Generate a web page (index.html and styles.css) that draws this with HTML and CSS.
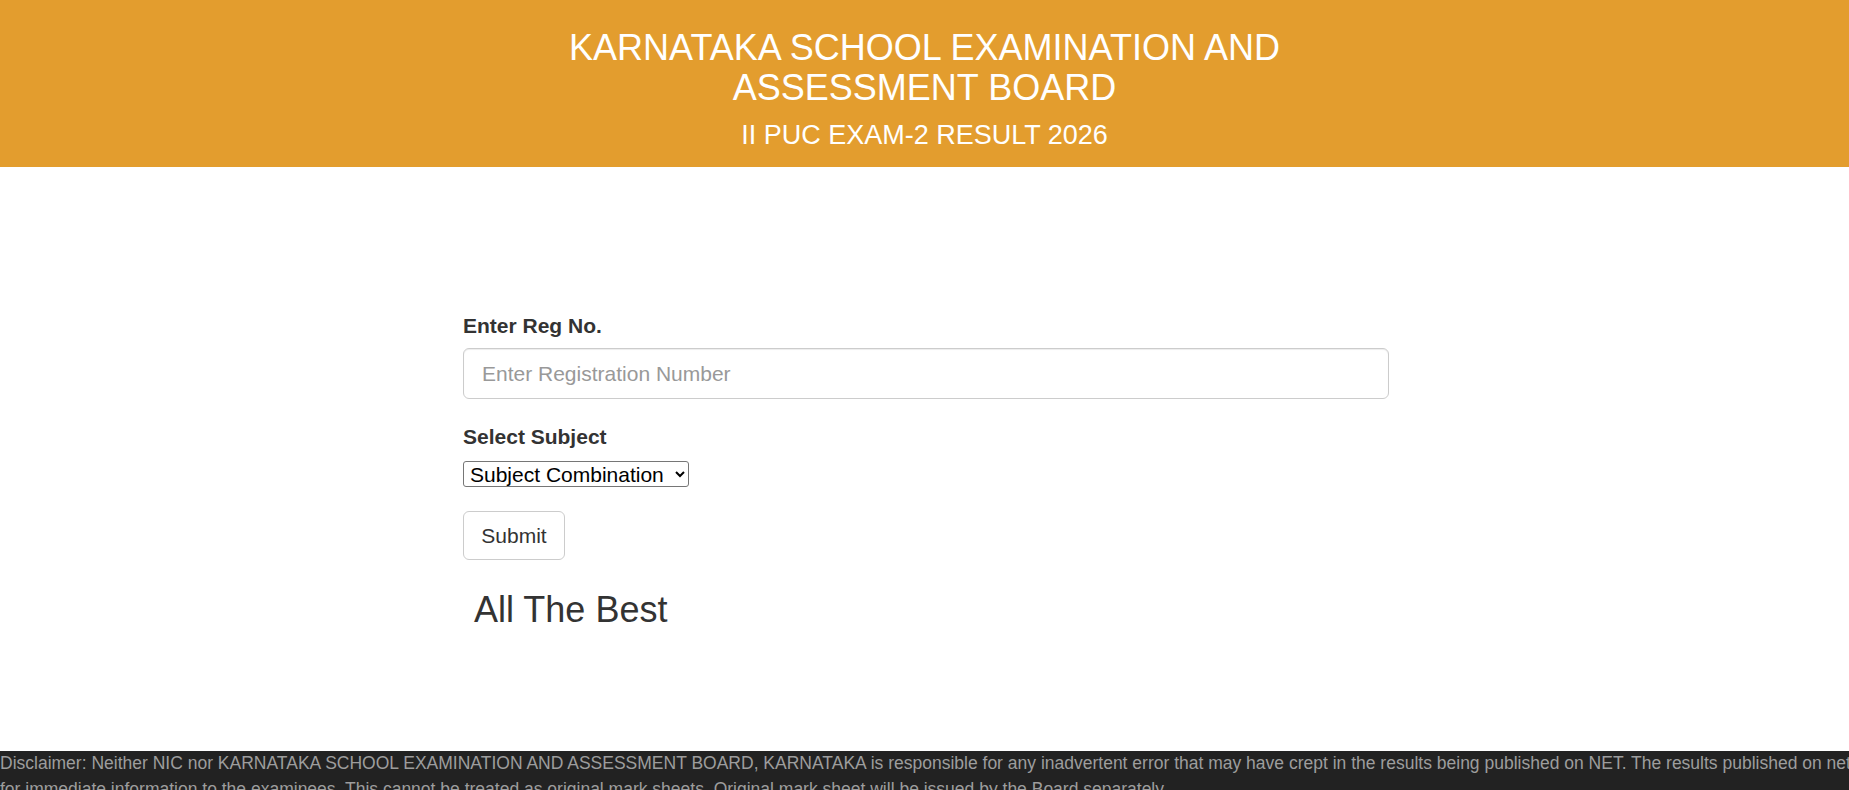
FILE: index.html
```html
<!DOCTYPE html>
<html lang="en">
<head>
<meta charset="utf-8">
<title>II PUC EXAM-2 RESULT 2026</title>
<link rel="stylesheet" href="styles.css">
</head>
<body>
<header class="banner">
  <h1 class="banner-title">KARNATAKA SCHOOL EXAMINATION AND ASSESSMENT BOARD</h1>
  <h2 class="banner-sub">II PUC EXAM-2 RESULT 2026</h2>
</header>
<main class="main">
  <form class="result-form" onsubmit="return false;">
    <div class="form-group">
      <label class="form-label" for="regno">Enter Reg No.</label>
      <input class="form-input" id="regno" type="text" placeholder="Enter Registration Number">
    </div>
    <div class="form-group">
      <label class="form-label" for="subject">Select Subject</label>
      <div class="select-line">
        <select class="form-select" id="subject">
          <option>Subject Combination</option>
        </select>
      </div>
    </div>
    <button class="btn" type="submit">Submit</button>
    <h3 class="wish">All The Best</h3>
  </form>
</main>
<footer class="footer">
  <span class="footer-line">Disclaimer: Neither NIC nor KARNATAKA SCHOOL EXAMINATION AND ASSESSMENT BOARD, KARNATAKA is responsible for any inadvertent error that may have crept in the results being published on NET. The results published on net</span>
  <span class="footer-line">for immediate information to the examinees. This cannot be treated as original mark sheets. Original mark sheet will be issued by the Board separately.</span>
</footer>
</body>
</html>
```

FILE: styles.css
```css
html, body {
  margin: 0;
  padding: 0;
}
body {
  font-family: "Liberation Sans", Arial, Helvetica, sans-serif;
  color: #333333;
  background: #ffffff;
  overflow-x: hidden;
}
.banner {
  background: #e39d2e;
  color: #ffffff;
  text-align: center;
  padding: 28px 0 1px;
  height: 167px;
  box-sizing: border-box;
}
.banner-title {
  font-weight: normal;
  font-size: 36px;
  line-height: 39.6px;
  max-width: 840px;
  margin: 0 auto;
}
.banner-sub {
  font-weight: normal;
  font-size: 27px;
  line-height: 29.7px;
  margin: 14px 0 0;
}
.main {
  padding-top: 144px;
  height: 584px;
  box-sizing: border-box;
}
.result-form {
  width: 926px;
  margin: 0 auto;
  padding-left: 3px;
}
.form-group {
  margin-bottom: 22.5px;
}
.form-label {
  display: block;
  font-weight: bold;
  font-size: 21px;
  line-height: 30px;
  margin-bottom: 7px;
}
.form-input {
  display: block;
  width: 100%;
  height: 51px;
  box-sizing: border-box;
  padding: 0 18px;
  font-family: "Liberation Sans", Arial, sans-serif;
  font-size: 21px;
  color: #555555;
  border: 1px solid #cccccc;
  border-radius: 6px;
  box-shadow: inset 0 1px 1px rgba(0, 0, 0, 0.075);
  outline: none;
}
.form-input::placeholder {
  color: #999999;
}
.select-line {
  height: 30px;
  padding-top: 2px;
  box-sizing: border-box;
}
.form-select {
  display: block;
  width: 226px;
  height: 26px;
  font-family: "Liberation Sans", Arial, sans-serif;
  font-size: 21px;
  color: #000000;
  background: #ffffff;
  border: 1px solid #767676;
  border-radius: 3px;
  padding: 0 2px;
}
.btn {
  display: block;
  width: 102px;
  height: 49px;
  padding: 0;
  font-family: "Liberation Sans", Arial, sans-serif;
  font-size: 21px;
  color: #333333;
  background: #ffffff;
  border: 1px solid #cccccc;
  border-radius: 6px;
}
.wish {
  font-weight: normal;
  font-size: 36px;
  line-height: 39.6px;
  margin: 30px 0 0;
  padding-left: 11px;
}
.footer {
  background: #222222;
  color: #9d9d9d;
  font-size: 17.5px;
  line-height: 25.5px;
}
.footer-line {
  display: block;
  white-space: nowrap;
  overflow: hidden;
}
```
